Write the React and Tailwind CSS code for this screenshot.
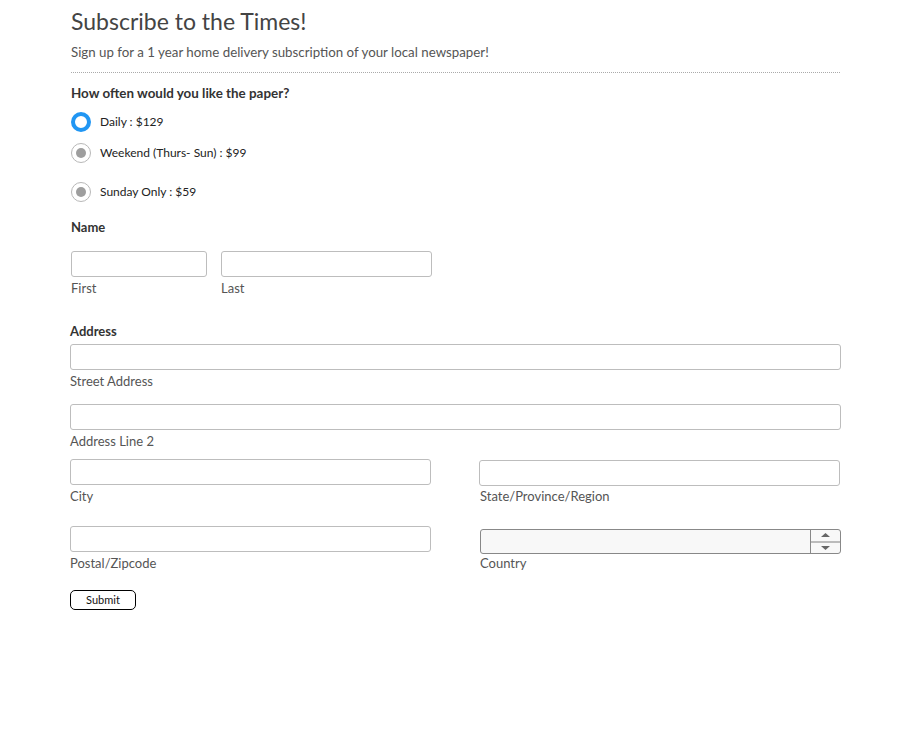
import React from "react";

const font = { fontFamily: '"Source Sans Pro", Lato, "Liberation Sans", sans-serif' };

function Radio({ checked, label, className }) {
  return (
    <div className={"flex items-center h-[20px] " + className}>
      {checked ? (
        <span className="w-[20px] h-[20px] rounded-full border-[4px] border-[#2196f3] bg-white box-border" />
      ) : (
        <span className="w-[20px] h-[20px] rounded-full border border-[#b8b8b8] bg-white box-border flex items-center justify-center">
          <span className="w-[10px] h-[10px] rounded-full bg-[#9e9e9e]" />
        </span>
      )}
      <span className="ml-[9px] text-[12px] text-[#222]">{label}</span>
    </div>
  );
}

function Field({ w, label, className = "" }) {
  return (
    <div className={className} style={{ width: w }}>
      <div className="h-[26px] border border-[#bdbdbd] rounded-[3px] bg-white" />
      <div className="text-[13px] text-[#555] mt-[3px] leading-[16px]">{label}</div>
    </div>
  );
}

export default function App() {
  return (
    <div className="bg-white w-[902px] h-[730px]" style={font}>
      <div className="ml-[70px] w-[771px]">
        <h1 className="pl-px pt-[5px] text-[23px] leading-[32px] text-[#444] font-normal">Subscribe to the Times!</h1>
        <p className="pl-px mt-[7px] text-[13.3px] leading-[16px] text-[#555]">
          Sign up for a 1 year home delivery subscription of your local newspaper!
        </p>
        <div className="ml-px mt-[12px] w-[769px] border-t border-dotted border-[#aaa]" />
        <div className="pl-px mt-[12px] text-[13.4px] leading-[16px] font-bold text-[#333]">How often would you like the paper?</div>
        <div className="pl-px">
          <Radio checked label="Daily : $129" className="mt-[11px]" />
          <Radio label="Weekend (Thurs- Sun) : $99" className="mt-[11px]" />
          <Radio label="Sunday Only : $59" className="mt-[19px]" />
        </div>
        <div className="pl-px mt-[17px] text-[13px] leading-[16px] font-bold text-[#333]">Name</div>
        <div className="pl-px mt-[16px] flex gap-[14px]">
          <Field w={136} label="First" />
          <Field w={211} label="Last" />
        </div>
        <div className="mt-[27px] text-[13px] leading-[16px] font-bold text-[#333]">Address</div>
        <Field w={771} label="Street Address" className="mt-[5px]" />
        <Field w={771} label="Address Line 2" className="mt-[15px]" />
        <div className="flex mt-[10px]">
          <Field w={361} label="City" />
          <div className="ml-[48px] mt-px">
            <div className="w-[361px] h-[26px] border border-[#bdbdbd] rounded-[3px] bg-white" />
            <div className="text-[13px] text-[#555] mt-[2px] leading-[16px] pl-px">State/Province/Region</div>
          </div>
        </div>
        <div className="flex mt-[22px]">
          <Field w={361} label="Postal/Zipcode" />
          <div className="ml-[49px] mt-[3px]">
            <div className="w-[361px] h-[25px] border border-[#888] rounded-[3px] bg-[#f8f8f8] flex">
              <div className="flex-1" />
              <div className="w-[30px] border-l border-[#888] flex flex-col">
                <div className="flex-1 flex items-center justify-center border-b-[2px] border-[#bbb]">
                  <svg width="9" height="4" viewBox="0 0 9 4"><path d="M0 4 L4.5 0 L9 4 Z" fill="#666" /></svg>
                </div>
                <div className="flex-1 flex items-center justify-center">
                  <svg width="9" height="4" viewBox="0 0 9 4"><path d="M0 0 L4.5 4 L9 0 Z" fill="#666" /></svg>
                </div>
              </div>
            </div>
            <div className="text-[13px] text-[#555] mt-[1px] leading-[16px]">Country</div>
          </div>
        </div>
        <button className="mt-[19px] w-[66px] h-[20px] border border-black rounded-[5px] bg-white text-[11px] text-[#111] leading-[16px]">
          Submit
        </button>
      </div>
    </div>
  );
}
